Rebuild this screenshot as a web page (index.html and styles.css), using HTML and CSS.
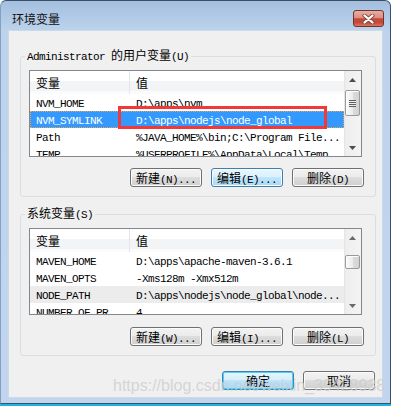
FILE: index.html
```html
<!DOCTYPE html>
<html lang="zh-CN">
<head>
    <meta charset="UTF-8">
    <title>环境变量</title>
    <link rel="stylesheet" href="styles.css">
</head>
<body>

    <!-- Dialog window -->
    <div class="window">
        <div class="titlebar">
            <span class="title">环境变量</span>
            <div class="close-btn">
                <svg width="13" height="10" viewBox="0 0 13 10">
                    <path d="M2.5 1.5 L10.5 8.5 M10.5 1.5 L2.5 8.5" stroke="#7d4b44" stroke-width="4" stroke-linecap="round"/>
                    <path d="M2.5 1.5 L10.5 8.5 M10.5 1.5 L2.5 8.5" stroke="#fff" stroke-width="2.2" stroke-linecap="round"/>
                </svg>
            </div>
        </div>

        <div class="content">
            <!-- User variables -->
            <fieldset class="group">
                <legend><span class="m">Administrator </span>的用户变量<span class="m">(U)</span></legend>
                <div class="list">
                    <div class="list-main">
                        <div class="list-head">
                            <div class="col-name">变量</div>
                            <div class="col-value">值</div>
                        </div>
                        <div class="list-row">
                            <div class="col-name">NVM_HOME</div>
                            <div class="col-value">D:\apps\nvm</div>
                        </div>
                        <div class="list-row selected">
                            <div class="col-name">NVM_SYMLINK</div>
                            <div class="col-value">D:\apps\nodejs\node_global</div>
                        </div>
                        <div class="list-row">
                            <div class="col-name">Path</div>
                            <div class="col-value">%JAVA_HOME%\bin;C:\Program File...</div>
                        </div>
                        <div class="list-row">
                            <div class="col-name">TEMP</div>
                            <div class="col-value">%USERPROFILE%\AppData\Local\Temp</div>
                        </div>
                    </div>
                    <div class="sb">
                        <div class="sb-btn"><svg width="7" height="4"><path d="M0 4 L3.5 0 L7 4Z" fill="#4d4d4d"/></svg></div>
                        <div class="sb-track">
                            <div class="sb-thumb thumb-user"><div class="grip"></div></div>
                        </div>
                        <div class="sb-btn"><svg width="7" height="4"><path d="M0 0 L3.5 4 L7 0Z" fill="#4d4d4d"/></svg></div>
                    </div>
                </div>
                <div class="btn-row">
                    <button class="btn">新建<span class="m">(N)...</span></button>
                    <button class="btn hover">编辑<span class="m">(E)...</span></button>
                    <button class="btn">删除<span class="m">(D)</span></button>
                </div>
            </fieldset>

            <!-- System variables -->
            <fieldset class="group group-sys">
                <legend>系统变量<span class="m">(S)</span></legend>
                <div class="list">
                    <div class="list-main">
                        <div class="list-head">
                            <div class="col-name">变量</div>
                            <div class="col-value">值</div>
                        </div>
                        <div class="list-row">
                            <div class="col-name">MAVEN_HOME</div>
                            <div class="col-value">D:\apps\apache-maven-3.6.1</div>
                        </div>
                        <div class="list-row">
                            <div class="col-name">MAVEN_OPTS</div>
                            <div class="col-value">-Xms128m -Xmx512m</div>
                        </div>
                        <div class="list-row inactive">
                            <div class="col-name">NODE_PATH</div>
                            <div class="col-value">D:\apps\nodejs\node_global\node...</div>
                        </div>
                        <div class="list-row">
                            <div class="col-name">NUMBER_OF_PR</div>
                            <div class="col-value">4</div>
                        </div>
                    </div>
                    <div class="sb">
                        <div class="sb-btn"><svg width="7" height="4"><path d="M0 4 L3.5 0 L7 4Z" fill="#6a6a6a"/></svg></div>
                        <div class="sb-track">
                            <div class="sb-thumb thumb-sys"></div>
                        </div>
                        <div class="sb-btn"><svg width="7" height="4"><path d="M0 0 L3.5 4 L7 0Z" fill="#6a6a6a"/></svg></div>
                    </div>
                </div>
                <div class="btn-row">
                    <button class="btn">新建<span class="m">(W)...</span></button>
                    <button class="btn">编辑<span class="m">(I)...</span></button>
                    <button class="btn">删除<span class="m">(L)</span></button>
                </div>
            </fieldset>

            <div class="dialog-btns">
                <button class="btn default">确定</button>
                <button class="btn">取消</button>
            </div>
        </div>
    </div>
    <div class="taskline"></div>

    <!-- Annotation and watermark over the screenshot -->
    <div class="mark-box"></div>
    <div class="watermark">https://blog.csdn.net/weixin_39428938</div>

</body>
</html>
```

FILE: styles.css
```css
body {
    margin: 0;
    width: 394px;
    height: 406px;
    overflow: hidden;
    position: relative;
    background: #fff;
    font-family: "Noto Sans CJK SC", sans-serif;
    font-size: 12px;
    color: #000;
}
.m {
    font-family: "Liberation Mono", monospace;
    font-size: 11px;
    letter-spacing: -0.6px;
}
.window {
    width: 391px;
    height: 404px;
    box-sizing: border-box;
    border: 1px solid #3b5068;
    border-left-color: #86a1c0;
    border-radius: 6px 6px 0 0;
    background: linear-gradient(#a4bfdf 0, #bdd3ec 30px, #c1d6ee 100%);
    display: flex;
    flex-direction: column;
}
.titlebar {
    height: 29px;
    flex: none;
    display: flex;
    justify-content: space-between;
    align-items: flex-start;
    padding: 0 6px 0 11px;
}
.title {
    margin-top: 9px;
    line-height: 17px;
    color: #111;
}
.close-btn {
    margin-top: 9px;
    width: 31px;
    height: 17px;
    box-sizing: border-box;
    border: 1px solid #6f342c;
    border-radius: 3px;
    background: linear-gradient(#e9ada1 0, #dc8f81 45%, #c5473a 52%, #c54a37 78%, #d8785e 100%);
    display: flex;
    align-items: center;
    justify-content: center;
}
.content {
    height: 368px;
    flex: none;
    box-sizing: border-box;
    margin: 0 7px;
    border: 1px solid #cbdaea;
    background: #f0f0f0;
}
.group {
    margin: 17px 6px 0 11px;
    padding: 0 11px 9px 8px;
    border: 1px solid #d5dfe5;
    border-radius: 3px;
    min-width: 0;
}
.group-sys {
    margin-top: 9px;
}
.group legend {
    margin-left: -4px;
    padding: 0 2px;
    line-height: 14px;
    white-space: pre;
}
.list {
    margin-top: 6px;
    width: 333px;
    height: 87px;
    box-sizing: border-box;
    border: 1px solid #828790;
    background: #fff;
    display: flex;
}
.list-main {
    flex: 1;
    overflow: hidden;
}
.list-head {
    display: flex;
    height: 23px;
    line-height: 23px;
    background: linear-gradient(#ffffff 0, #ffffff 42%, #f3f4f6 42%, #f3f4f6 86%, #fbfbfb 86%);
}
.list-head .col-name {
    border-right: 1px solid #e2e6ec;
}
.col-name {
    width: 99px;
    flex: none;
    padding-left: 6px;
    box-sizing: border-box;
    white-space: nowrap;
    overflow: hidden;
}
.list-head .col-name {
    width: 100px;
}
.col-value {
    flex: 1;
    padding-left: 6px;
    white-space: nowrap;
    overflow: hidden;
}
.list-row .col-name {
    width: 100px;
}
.list-row {
    display: flex;
    height: 17px;
    box-sizing: border-box;
    padding-top: 3px;
    line-height: 14px;
    font-family: "Liberation Mono", monospace;
    font-size: 11px;
    letter-spacing: -0.6px;
}
.list-row.selected {
    background: #3399ff;
    color: #fff;
    outline: 1px dotted #e9a24a;
    outline-offset: -1px;
}
.list-row.inactive {
    background: #ececec;
}
.sb {
    width: 17px;
    flex: none;
    display: flex;
    flex-direction: column;
    background: linear-gradient(to right, #e3e3e3 0, #eeeeee 2px, #f4f4f4 100%);
}
.sb-btn {
    height: 17px;
    flex: none;
    display: flex;
    align-items: center;
    justify-content: center;
}
.sb-track {
    flex: 1;
}
.sb-thumb {
    margin: 0 1px;
    box-sizing: border-box;
    border: 1px solid #9a9a9a;
    border-radius: 2px;
    background: linear-gradient(to right, #fbfbfb, #ececec 50%, #dcdcdc 52%, #d2d2d2);
    box-shadow: inset 1px 1px 0 #fff;
    display: flex;
    align-items: center;
    justify-content: center;
}
.thumb-user {
    margin-top: 2px;
    height: 26px;
}
.thumb-sys {
    margin-top: 9px;
    height: 14px;
}
.grip {
    width: 7px;
    height: 7px;
    background: repeating-linear-gradient(#5f5f5f 0, #5f5f5f 1px, #eeeeee 1px, #eeeeee 2px);
}
.btn-row {
    margin-top: 11px;
    display: flex;
    justify-content: flex-end;
    gap: 9px;
}
.group-sys .btn-row {
    margin-top: 12px;
}
.btn {
    width: 72px;
    height: 19px;
    box-sizing: border-box;
    padding: 0;
    border: 1px solid #707070;
    border-radius: 3px;
    background: linear-gradient(#f2f2f2 0, #ebebeb 50%, #dddddd 50%, #cfcfcf 100%);
    box-shadow: inset 0 0 0 1px #fbfbfb;
    font-family: "Noto Sans CJK SC", sans-serif;
    font-size: 12px;
    line-height: 17px;
    color: #000;
    white-space: nowrap;
}
.btn.hover {
    border-color: #3c7fb1;
    background: linear-gradient(#eaf6fd 0, #d9f0fc 50%, #bee6fd 50%, #a7d9f5 100%);
}
.btn.default {
    border-color: #3c7fb1;
    background: linear-gradient(#e8f5fc 0, #d6eefb 50%, #bde4f9 50%, #a9daf5 100%);
    box-shadow: inset 0 0 0 1px #4dd2f7;
}
.dialog-btns {
    margin-top: 15px;
    padding-right: 7px;
    display: flex;
    justify-content: flex-end;
    gap: 9px;
}
.taskline {
    height: 2px;
    width: 391px;
    background: #1fb4de;
}
.mark-box {
    position: absolute;
    left: 118px;
    top: 106px;
    width: 209px;
    height: 23px;
    box-sizing: border-box;
    border: 3px solid #f03a3a;
}
.watermark {
    position: absolute;
    left: 113px;
    top: 377px;
    font-family: "Liberation Sans", sans-serif;
    font-size: 16px;
    line-height: 18px;
    color: rgba(205, 205, 205, 0.8);
    white-space: nowrap;
}
```
